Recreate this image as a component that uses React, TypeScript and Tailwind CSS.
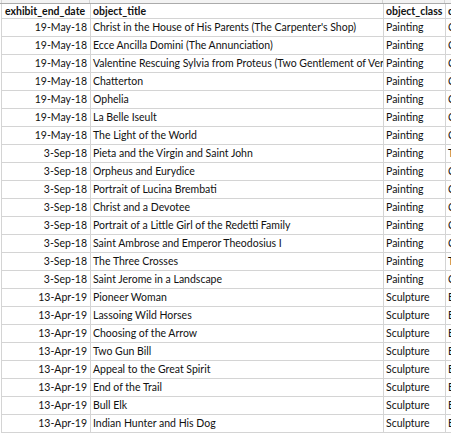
import React from "react";

const rows: [string, string, string, string][] = [
  ["19-May-18", "Christ in the House of His Parents (The Carpenter's Shop)", "Painting", "C"],
  ["19-May-18", "Ecce Ancilla Domini (The Annunciation)", "Painting", "C"],
  ["19-May-18", "Valentine Rescuing Sylvia from Proteus (Two Gentlement of Verona)", "Painting", "C"],
  ["19-May-18", "Chatterton", "Painting", "C"],
  ["19-May-18", "Ophelia", "Painting", "C"],
  ["19-May-18", "La Belle Iseult", "Painting", "C"],
  ["19-May-18", "The Light of the World", "Painting", "C"],
  ["3-Sep-18", "Pieta and the Virgin and Saint John", "Painting", "T"],
  ["3-Sep-18", "Orpheus and Eurydice", "Painting", "C"],
  ["3-Sep-18", "Portrait of Lucina Brembati", "Painting", "C"],
  ["3-Sep-18", "Christ and a Devotee", "Painting", "C"],
  ["3-Sep-18", "Portrait of a Little Girl of the Redetti Family", "Painting", "C"],
  ["3-Sep-18", "Saint Ambrose and Emperor Theodosius I", "Painting", "C"],
  ["3-Sep-18", "The Three Crosses", "Painting", "T"],
  ["3-Sep-18", "Saint Jerome in a Landscape", "Painting", "C"],
  ["13-Apr-19", "Pioneer Woman", "Sculpture", "E"],
  ["13-Apr-19", "Lassoing Wild Horses", "Sculpture", "E"],
  ["13-Apr-19", "Choosing of the Arrow", "Sculpture", "E"],
  ["13-Apr-19", "Two Gun Bill", "Sculpture", "E"],
  ["13-Apr-19", "Appeal to the Great Spirit", "Sculpture", "E"],
  ["13-Apr-19", "End of the Trail", "Sculpture", "E"],
  ["13-Apr-19", "Bull Elk", "Sculpture", "E"],
  ["13-Apr-19", "Indian Hunter and His Dog", "Sculpture", "E"],
];

const cell = "border-r border-b border-[#d4d4d4] overflow-hidden whitespace-nowrap shrink-0 flex items-center";

export default function App() {
  return (
    <div
      className="w-[451px] h-[437px] overflow-hidden bg-white text-[#111] text-[10.5px] leading-none"
      style={{ fontFamily: "Lato, 'Open Sans', sans-serif" }}
    >
      <div className="h-[3px] bg-[#f3f3f3] border-b border-[#ababab] box-content flex pl-px">
        <div className="w-[89px] border-r border-[#d4d4d4] border-l shrink-0" />
        <div className="w-[293px] border-r border-[#d4d4d4] shrink-0" />
        <div className="w-[62px] border-r border-[#d4d4d4] shrink-0" />
      </div>
      <div className="flex pl-px">
        <div className="flex border-l border-[#d4d4d4] font-bold">
          <div className={`${cell} w-[89px] h-[15px] pl-[3px]`}>exhibit_end_date</div>
          <div className={`${cell} w-[293px] h-[15px] pl-[2px]`}>object_title</div>
          <div className={`${cell} w-[62px] h-[15px] pl-[2px]`}>object_class</div>
          <div className={`${cell} w-[40px] h-[15px] pl-[2px]`}>culture</div>
        </div>
      </div>
      {rows.map((r, i) => (
        <div key={i} className="flex pl-px">
          <div className="flex border-l border-[#d4d4d4]">
            <div className={`${cell} w-[89px] h-[18px] justify-end pr-[3px]`}>{r[0]}</div>
            <div className={`${cell} w-[293px] h-[18px] pl-[2px]`}>{r[1]}</div>
            <div className={`${cell} w-[62px] h-[18px] pl-[2px]`}>{r[2]}</div>
            <div className={`${cell} w-[40px] h-[18px] pl-[2px]`}>{r[3]}</div>
          </div>
        </div>
      ))}
    </div>
  );
}
